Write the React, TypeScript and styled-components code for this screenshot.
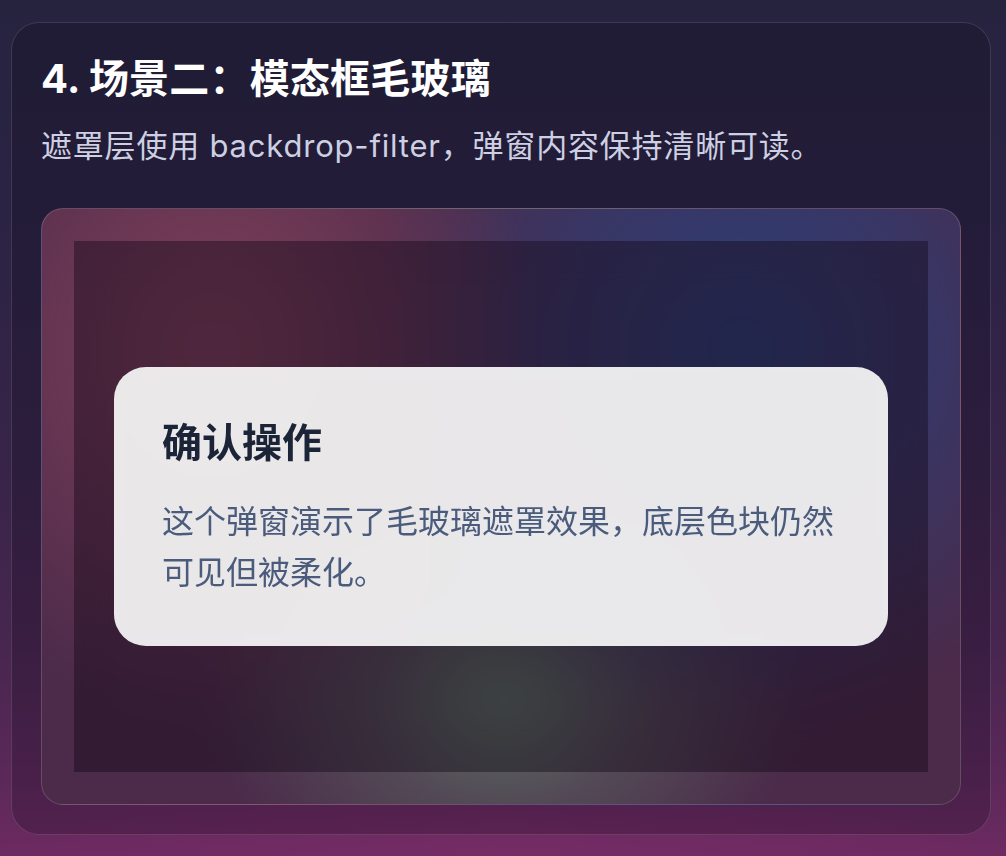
import React from 'react';
import styled, { createGlobalStyle } from 'styled-components';

const GlobalStyle = createGlobalStyle`
  html, body {
    margin: 0;
    padding: 0;
  }

  body {
    min-height: 856px;
    font-family: Inter, 'Noto Sans CJK SC', sans-serif;
    background:
      radial-gradient(ellipse 520px 90px at 50% 100%, rgba(125, 45, 105, 0.55), transparent 100%),
      linear-gradient(180deg, #26233f 0%, #2c2345 30%, #382449 55%, #47264f 75%, #5a2859 90%, #6c2a61 100%);
  }
`;

const Page = styled.main`
  box-sizing: border-box;
  min-height: 856px;
  padding: 22px 15px 20px 11px;
`;

const Card = styled.section`
  box-sizing: border-box;
  padding: 30px 29px 29px;
  border-radius: 28px;
  border: 1px solid rgba(255, 255, 255, 0.13);
  background: rgba(8, 6, 18, 0.22);
`;

const Title = styled.h2`
  margin: 0 0 18px;
  font-size: 40px;
  line-height: 52px;
  font-weight: 700;
  color: #ffffff;
  letter-spacing: 0.2px;
`;

const Lead = styled.p`
  margin: 0 0 40px;
  font-size: 31px;
  line-height: 45px;
  letter-spacing: 0.8px;
  color: #cdd0e2;
`;

// the stage: colour blocks painted underneath the blurred overlay
const Stage = styled.div`
  box-sizing: border-box;
  display: flex;
  height: 597px;
  padding: 32px;
  border-radius: 22px;
  border: 1px solid rgba(255, 255, 255, 0.16);
  background:
    radial-gradient(ellipse 330px 380px at 170px 140px, rgba(128, 64, 90, 1) 0%, rgba(128, 64, 90, 0.55) 45%, rgba(128, 64, 90, 0) 100%),
    radial-gradient(ellipse 380px 380px at 700px 140px, rgba(44, 62, 118, 1) 0%, rgba(44, 62, 118, 0.6) 50%, rgba(44, 62, 118, 0) 100%),
    radial-gradient(ellipse 300px 230px at 462px 490px, rgba(92, 114, 100, 1) 0%, rgba(92, 114, 100, 0.45) 45%, rgba(92, 114, 100, 0) 100%),
    #4b2a4a;
`;

const Backdrop = styled.div`
  flex: 1;
  display: flex;
  align-items: center;
  padding: 0 40px;
  background: rgba(20, 10, 24, 0.44);
  backdrop-filter: blur(18px);
`;

const Dialog = styled.div`
  box-sizing: border-box;
  flex: 1;
  padding: 48px;
  border-radius: 32px;
  background: rgba(255, 255, 255, 0.9);
  backdrop-filter: blur(10px);
`;

const DialogTitle = styled.h3`
  margin: 0 0 25px;
  font-size: 40px;
  line-height: 56px;
  font-weight: 700;
  color: #1c2538;
`;

const DialogText = styled.p`
  margin: 0;
  font-size: 32px;
  line-height: 51px;
  color: #4a5b7c;
`;

export default function App() {
  return (
    <>
      <GlobalStyle />
      <Page>
        <Card>
          <Title>4. 场景二：模态框毛玻璃</Title>
          <Lead>遮罩层使用 backdrop-filter，弹窗内容保持清晰可读。</Lead>
          <Stage>
            <Backdrop>
              <Dialog>
                <DialogTitle>确认操作</DialogTitle>
                <DialogText>这个弹窗演示了毛玻璃遮罩效果，底层色块仍然可见但被柔化。</DialogText>
              </Dialog>
            </Backdrop>
          </Stage>
        </Card>
      </Page>
    </>
  );
}
